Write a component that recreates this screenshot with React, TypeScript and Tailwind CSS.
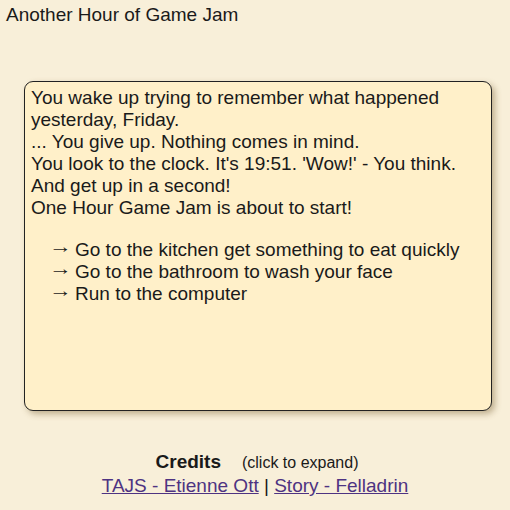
import React from 'react';

const choices = [
  'Go to the kitchen get something to eat quickly',
  'Go to the bathroom to wash your face',
  'Run to the computer',
];

const App: React.FC = () => {
  return (
    <div className="min-h-screen w-full bg-[#f8efd9] font-['Liberation_Sans',Arial,sans-serif] text-[#1a1a1a]">
      <h1 className="pl-[6px] pt-[4px] text-[19px] leading-[22px] font-normal">Another Hour of Game Jam</h1>

      <div className="ml-[24px] mt-[55px] w-[468px] h-[330px] rounded-[9px] border border-[#222] bg-[#fff0c9] px-[6px] pt-[5px] text-[19px] leading-[22px] shadow-[3px_3px_6px_rgba(120,95,50,0.45)]">
        <p>You wake up trying to remember what happened yesterday, Friday.</p>
        <p>... You give up. Nothing comes in mind.</p>
        <p>You look to the clock. It's 19:51. 'Wow!' - You think.</p>
        <p>And get up in a second!</p>
        <p>One Hour Game Jam is about to start!</p>
        <div className="mt-[20px] flex flex-col">
          {choices.map((c) => (
            <div key={c} className="pl-[18px] cursor-pointer">
              <span className="inline-block w-[26px] origin-left -translate-y-[3px] scale-x-[1.2]">→</span>
              {c}
            </div>
          ))}
        </div>
      </div>

      <div className="mt-[39px] flex flex-col items-center">
        <div className="flex items-baseline gap-[21px] pl-[4px]">
          <span className="text-[19px] font-bold leading-[24px]">Credits</span>
          <span className="text-[16px] leading-[24px]">(click to expand)</span>
        </div>
        <div className="text-[19px] leading-[22px]">
          <a className="text-[#4e3382] underline" href="#">TAJS - Etienne Ott</a>
          {' | '}
          <a className="text-[#4e3382] underline" href="#">Story - Felladrin</a>
        </div>
      </div>
    </div>
  );
};

export default App;
